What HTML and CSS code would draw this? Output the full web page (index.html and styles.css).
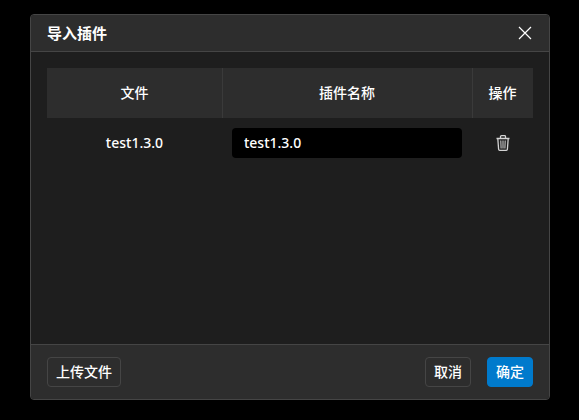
FILE: index.html
```html
<!DOCTYPE html>
<html lang="zh-CN">
<head>
  <meta charset="UTF-8">
  <meta name="viewport" content="width=device-width, initial-scale=1">
  <title>导入插件</title>
  <link rel="stylesheet" href="styles.css">
</head>
<body>

  <div class="dialog" role="dialog" aria-labelledby="dialog-title">
    <header class="dialog-header">
      <h1 id="dialog-title">导入插件</h1>
      <button type="button" class="icon-btn" aria-label="关闭">
        <svg width="14" height="14" viewBox="0 0 14 14" fill="none" stroke="currentColor" stroke-width="1.2">
          <path d="M1 1L13 13M13 1L1 13"/>
        </svg>
      </button>
    </header>

    <main class="dialog-body">
      <table class="plugin-table">
        <colgroup>
          <col class="col-file">
          <col>
          <col class="col-action">
        </colgroup>
        <thead>
          <tr>
            <th>文件</th>
            <th id="name-label">插件名称</th>
            <th>操作</th>
          </tr>
        </thead>
        <tbody>
          <tr>
            <td>test1.3.0</td>
            <td><input type="text" class="name-input" value="test1.3.0" aria-labelledby="name-label"></td>
            <td>
              <button type="button" class="icon-btn trash" aria-label="删除">
                <svg width="14" height="16" viewBox="0 0 14 16" fill="none" stroke="currentColor">
                  <path stroke-width="1.3" d="M0.5 3.5H13.5M4.5 3.5V1.5Q4.5 0.7 5.5 0.7H8.5Q9.5 0.7 9.5 1.5V3.5"/>
                  <path stroke-width="1.3" d="M1.8 3.5L2.6 14.3Q2.7 15.3 3.7 15.3H10.3Q11.3 15.3 11.4 14.3L12.2 3.5"/>
                  <path d="M4.8 5.5L5.1 13.5M7 5.5V13.5M9.2 5.5L8.9 13.5"/>
                </svg>
              </button>
            </td>
          </tr>
        </tbody>
      </table>
    </main>

    <footer class="dialog-footer">
      <button type="button" class="btn upload">上传文件</button>
      <button type="button" class="btn">取消</button>
      <button type="button" class="btn primary">确定</button>
    </footer>
  </div>

</body>
</html>
```

FILE: styles.css
```css
* {
  box-sizing: border-box;
}
body {
  margin: 0;
  padding: 14px 29px 20px 30px;
  min-height: 100vh;
  display: flex;
  background: #000;
  color: #fff;
  font-family: "Noto Sans", "Noto Sans CJK SC", sans-serif;
  font-size: 14px;
  font-weight: 500;
  line-height: 20px;
}
button, input {
  font: inherit;
  color: inherit;
}
.dialog {
  flex: 1;
  display: flex;
  flex-direction: column;
  background: #1e1e1e;
  border: 1px solid #454545;
  border-radius: 4px;
  overflow: hidden;
}
.dialog-header {
  display: flex;
  align-items: center;
  justify-content: space-between;
  padding: 8px 16px;
  background: #2d2d2d;
  border-bottom: 1px solid #454545;
}
.dialog-header h1 {
  margin: 0;
  font-size: 15px;
  font-weight: bold;
}
.icon-btn {
  display: flex;
  padding: 1px;
  background: none;
  border: none;
  cursor: pointer;
}
.icon-btn.trash {
  margin: 0 auto;
  color: #d4d4d4;
}
.dialog-body {
  flex: 1;
  padding: 16px;
}
.plugin-table {
  width: 100%;
  table-layout: fixed;
  border-collapse: collapse;
  text-align: center;
}
.col-file {
  width: 36%;
}
.col-action {
  width: 61px;
}
.plugin-table th {
  height: 50px;
  padding: 0;
  background: #2d2d2d;
  font-weight: 500;
}
.plugin-table th + th {
  box-shadow: inset 1px 0 #3a3a3a;
}
.plugin-table td {
  height: 50px;
  padding: 0 10px;
}
.name-input {
  display: block;
  width: 100%;
  height: 30px;
  padding: 0 12px 2px;
  background: #000;
  border: none;
  border-radius: 4px;
}
.dialog-footer {
  display: flex;
  gap: 16px;
  padding: 12px 16px;
  background: #2d2d2d;
  border-top: 1px solid #454545;
}
.btn {
  height: 30px;
  padding: 0 8px;
  background: none;
  border: 1px solid #454545;
  border-radius: 4px;
  cursor: pointer;
}
.btn.upload {
  margin-right: auto;
}
.btn.primary {
  background: #007acc;
  border-color: #007acc;
}
```
